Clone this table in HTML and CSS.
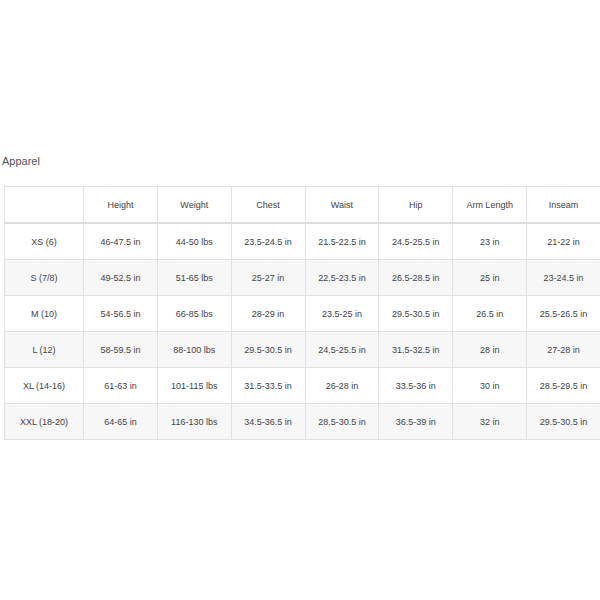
FILE: index.html
```html
<!DOCTYPE html>
<html>
<head>
<meta charset="utf-8">
<link rel="stylesheet" href="styles.css">
</head>
<body>
<div class="page">
  <div class="title">Apparel</div>
  <table class="size-table">
    <thead>
      <tr>
        <th class="first"></th>
        <th>Height</th>
        <th>Weight</th>
        <th>Chest</th>
        <th>Waist</th>
        <th>Hip</th>
        <th>Arm Length</th>
        <th>Inseam</th>
      </tr>
    </thead>
    <tbody>
      <tr><td>XS (6)</td><td>46-47.5 in</td><td>44-50 lbs</td><td>23.5-24.5 in</td><td>21.5-22.5 in</td><td>24.5-25.5 in</td><td>23 in</td><td>21-22 in</td></tr>
      <tr class="alt"><td>S (7/8)</td><td>49-52.5 in</td><td>51-65 lbs</td><td>25-27 in</td><td>22.5-23.5 in</td><td>26.5-28.5 in</td><td>25 in</td><td>23-24.5 in</td></tr>
      <tr><td>M (10)</td><td>54-56.5 in</td><td>66-85 lbs</td><td>28-29 in</td><td>23.5-25 in</td><td>29.5-30.5 in</td><td>26.5 in</td><td>25.5-26.5 in</td></tr>
      <tr class="alt"><td>L (12)</td><td>58-59.5 in</td><td>88-100 lbs</td><td>29.5-30.5 in</td><td>24.5-25.5 in</td><td>31.5-32.5 in</td><td>28 in</td><td>27-28 in</td></tr>
      <tr><td>XL (14-16)</td><td>61-63 in</td><td>101-115 lbs</td><td>31.5-33.5 in</td><td>26-28 in</td><td>33.5-36 in</td><td>30 in</td><td>28.5-29.5 in</td></tr>
      <tr class="alt"><td>XXL (18-20)</td><td>64-65 in</td><td>116-130 lbs</td><td>34.5-36.5 in</td><td>28.5-30.5 in</td><td>36.5-39 in</td><td>32 in</td><td>29.5-30.5 in</td></tr>
    </tbody>
  </table>
</div>
</body>
</html>
```

FILE: styles.css
```css
html, body {
  margin: 0;
  padding: 0;
  background: #ffffff;
}
body {
  font-family: "Liberation Sans", Arial, sans-serif;
  color: #333333;
}
.page {
  padding-top: 154px;
  width: 600px;
  overflow: hidden;
}
.title {
  font-size: 11px;
  line-height: 14px;
  color: #555555;
  padding-left: 2px;
  margin-bottom: 18px;
}
.size-table {
  margin-left: 4px;
  width: 597px;
  border-collapse: collapse;
  table-layout: fixed;
  font-size: 9px;
  color: #444444;
}
.size-table th,
.size-table td {
  border: 1px solid #e2e2e2;
  text-align: center;
  font-weight: normal;
  padding: 0;
  height: 35px;
}
.size-table th.first {
  width: 78px;
}
.size-table thead th {
  border-bottom: 2px solid #dddddd;
  height: 35px;
}
.size-table tr.alt td {
  background: #f7f7f7;
}
```
